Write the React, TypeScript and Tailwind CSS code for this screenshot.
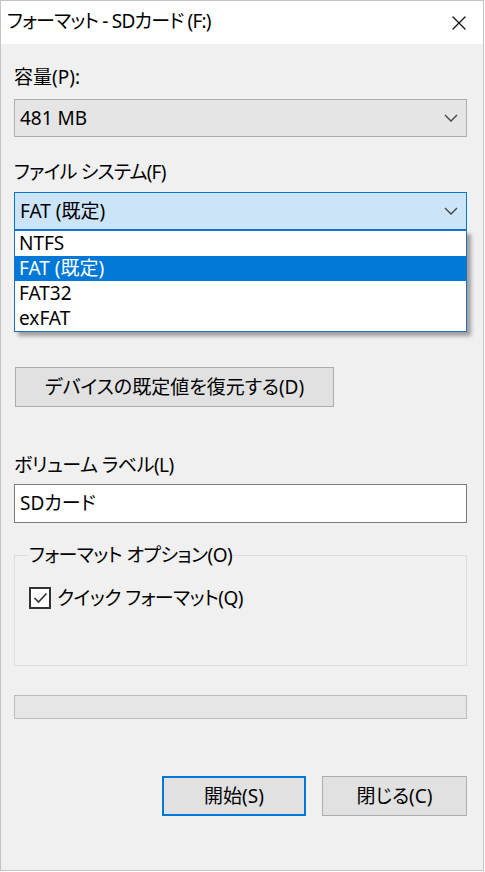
import { X } from "lucide-react";

const FONT = "font-['Noto_Sans','Noto_Sans_CJK_JP',sans-serif] [font-feature-settings:'palt']";

const OPTIONS = ["NTFS", "FAT (既定)", "FAT32", "exFAT"];

function Chevron() {
  return (
    <svg width="14" height="8" viewBox="0 0 14 8" className="shrink-0">
      <path d="M1 1 L7 7 L13 1" fill="none" stroke="#404040" strokeWidth="1.3" />
    </svg>
  );
}

function Label({ text, className = "" }: { text: string; className?: string }) {
  return <div className={`h-6 text-[19px] leading-6 text-black ${className}`}>{text}</div>;
}

export default function App() {
  return (
    <div className={`h-[872px] w-[485px] bg-white ${FONT}`}>
      <div className="flex h-[871px] w-[484px] flex-col border border-[#c4c4c4] bg-[#f0f0f0]">
        {/* title bar */}
        <div className="flex h-[43px] shrink-0 items-center justify-between bg-white pl-[6px] pr-[12px]">
          <span className="-mt-[3px] text-[19px] leading-6 tracking-[-0.8px] text-black">フォーマット - SDカード (F:)</span>
          <X size={24} strokeWidth={1.3} className="text-[#111]" />
        </div>

        <div className="flex flex-col pl-[13px] pr-[16px]">
          <Label text="容量(P):" className="mt-[21px]" />
          <div className="mt-[10px] flex h-[38px] items-center justify-between border border-[#adadad] bg-[#e5e5e5] pl-[5px] pr-[8px]">
            <span className="text-[19px] text-black">481 MB</span>
            <Chevron />
          </div>

          <Label text="ファイル システム(F)" className="mt-[23px] tracking-[-0.8px]" />
          <div className="relative mt-[8px]">
            <div className="flex h-[38px] items-center justify-between border border-[#0078d7] bg-[#cce4f7] pl-[5px] pr-[8px]">
              <span className="text-[19px] text-black">FAT (既定)</span>
              <Chevron />
            </div>
            <div className="absolute left-0 right-0 top-full z-10 border border-[#1e6ec8] bg-white shadow-[4px_4px_4px_rgba(0,0,0,0.35)]">
              {OPTIONS.map((o, i) => (
                <div
                  key={o}
                  className={`flex h-[25px] items-center pl-[4px] text-[19px] ${
                    i === 1 ? "bg-[#0078d7] text-white" : "text-black"
                  }`}
                >
                  {o}
                </div>
              ))}
            </div>
          </div>

          <button
            type="button"
            className="ml-px mt-[137px] flex h-[40px] w-[319px] items-center justify-center border border-[#adadad] bg-[#e1e1e1] text-[19px] text-black"
          >
            デバイスの既定値を復元する(D)
          </button>

          <Label text="ボリューム ラベル(L)" className="mt-[46px] tracking-[-0.5px]" />
          <div className="mt-[7px] flex h-[39px] items-center border border-[#7a7a7a] bg-white pl-[5px] text-[19px] text-black">
            SDカード
          </div>

          <fieldset className="mt-[20px] h-[123px] border border-[#dcdcdc] px-[14px]">
            <legend className="-ml-[1px] px-[1px] text-[19px] leading-6 tracking-[-0.5px] text-black">
              フォーマット オプション(O)
            </legend>
            <div className="mt-[19px] flex items-center gap-[6px]">
              <div className="flex h-[22px] w-[22px] items-center justify-center border-2 border-[#333] bg-white">
                <svg width="15" height="12" viewBox="0 0 15 12">
                  <path d="M1.5 6 L5.5 10 L13.5 1.5" fill="none" stroke="#333" strokeWidth="1.6" />
                </svg>
              </div>
              <span className="text-[19px] leading-6 tracking-[-0.5px] text-black">クイック フォーマット(Q)</span>
            </div>
          </fieldset>

          <div className="mt-[29px] h-[24px] border border-[#bcbcbc] bg-[#e6e6e6]" />

          <div className="mt-[57px] flex justify-end gap-[16px]">
            <button
              type="button"
              className="flex h-[40px] w-[144px] items-center justify-center border-2 border-[#0078d7] bg-[#e1e1e1] text-[19px] text-black"
            >
              開始(S)
            </button>
            <button
              type="button"
              className="flex h-[40px] w-[145px] items-center justify-center border border-[#adadad] bg-[#e1e1e1] text-[19px] text-black"
            >
              閉じる(C)
            </button>
          </div>
        </div>
      </div>
    </div>
  );
}
